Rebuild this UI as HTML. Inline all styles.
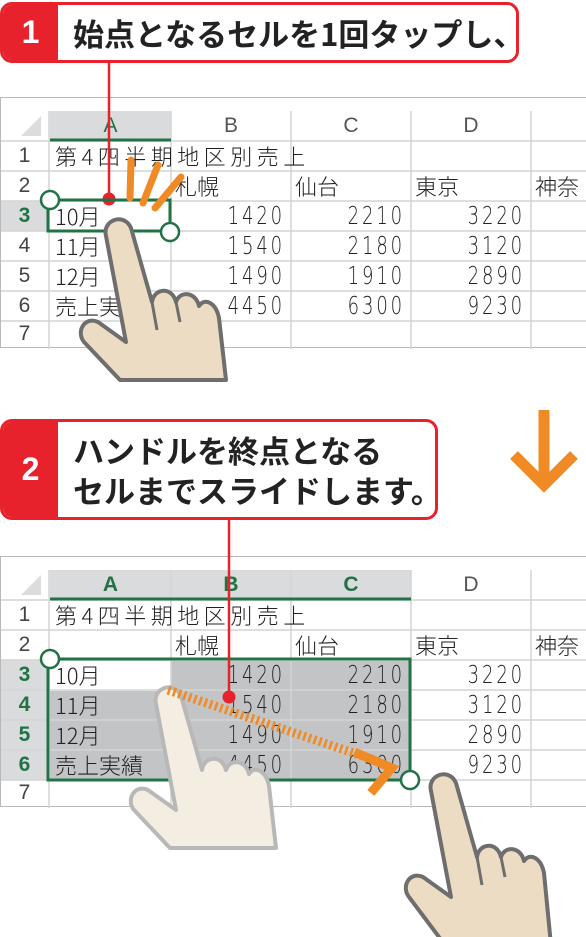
<!DOCTYPE html>
<html><head><meta charset="utf-8"><style>
*{margin:0;padding:0;box-sizing:border-box}
body{width:586px;height:937px;background:#fff;position:relative;overflow:hidden;font-family:"Liberation Sans","Noto Sans CJK JP",sans-serif}
.abs{position:absolute}
.sheet{position:absolute;left:0;width:586px;height:251px;border:1.5px solid #b9b9b9;border-right:none;background:#fff}
.c{position:absolute;font-family:"Noto Sans CJK JP",sans-serif;font-weight:300;font-size:22px;color:#222;line-height:30px;white-space:nowrap}
.n{position:absolute;font-family:"DejaVu Sans",sans-serif;font-weight:300;font-size:25px;color:#222;line-height:30px;text-align:right;width:112px;letter-spacing:4px;transform:scaleX(.72);transform-origin:right}
.h{position:absolute;font-family:"Liberation Sans",sans-serif;font-size:21px;color:#555;text-align:center;line-height:30px}
.rh{position:absolute;left:0;width:47px;text-align:center;font-family:"Liberation Sans",sans-serif;font-size:21px;color:#444;line-height:30px}
.g{color:#217346;font-weight:bold}
.call{position:absolute;border:3px solid #e8222c;border-radius:12px;background:#fff;overflow:hidden}
.badge{position:absolute;left:0;top:0;bottom:0;width:55px;background:#e8222c;color:#fff;font-weight:bold;font-size:32px;display:flex;align-items:center;justify-content:center}
.ct{position:absolute;left:70px;font-family:"Noto Sans CJK JP",sans-serif;font-weight:bold;font-size:31px;color:#222;line-height:40px;white-space:nowrap}
</style></head><body>

<div class="call" style="left:0;top:2px;width:519px;height:61px"><div class="badge">1</div><div class="ct" style="top:8px">始点となるセルを1回タップし、</div></div>

<div class="sheet" style="top:97px">
 <svg class="abs" style="left:0;top:0" width="586" height="251">
  <polygon points="40,38 40,18 20,38" fill="#dcdcdc"/>
  <rect x="49" y="13" width="121" height="30" fill="#dadbdc"/>
  <rect x="0" y="103" width="48" height="30" fill="#dadbdc"/>
  <g stroke="#d4d4d4" stroke-width="1.5">
   <line x1="48" y1="13" x2="48" y2="251"/><line x1="170" y1="13" x2="170" y2="251"/><line x1="290" y1="13" x2="290" y2="251"/><line x1="410" y1="13" x2="410" y2="251"/><line x1="530" y1="13" x2="530" y2="251"/>
   <line x1="0" y1="43" x2="586" y2="43"/><line x1="0" y1="73" x2="586" y2="73"/><line x1="0" y1="103" x2="586" y2="103"/><line x1="0" y1="133" x2="586" y2="133"/><line x1="0" y1="163" x2="586" y2="163"/><line x1="0" y1="193" x2="586" y2="193"/><line x1="0" y1="223" x2="586" y2="223"/>
  </g>
  <line x1="49" y1="42" x2="170" y2="42" stroke="#217346" stroke-width="3"/>
 </svg>
 <div class="h g" style="left:49px;width:121px;top:13px;font-weight:normal">A</div>
 <div class="h" style="left:170px;width:120px;top:13px">B</div>
 <div class="h" style="left:290px;width:120px;top:13px">C</div>
 <div class="h" style="left:410px;width:120px;top:13px">D</div>
 <div class="rh" style="top:43px">1</div><div class="rh" style="top:73px">2</div><div class="rh g" style="top:103px">3</div><div class="rh" style="top:133px">4</div><div class="rh" style="top:163px">5</div><div class="rh" style="top:193px">6</div><div class="rh" style="top:221px">7</div>
 <div class="c" style="left:54px;top:43px;letter-spacing:4.5px">第4四半期地区別売上</div>
 <div class="c" style="left:174px;top:73px">札幌</div><div class="c" style="left:294px;top:73px">仙台</div><div class="c" style="left:414px;top:73px">東京</div><div class="c" style="left:534px;top:73px">神奈</div>
 <div class="c" style="left:54px;top:103px">10月</div><div class="c" style="left:54px;top:133px">11月</div><div class="c" style="left:54px;top:163px">12月</div><div class="c" style="left:54px;top:193px">売上実績</div>
 <div class="n" style="left:172px;top:103px">1420</div><div class="n" style="left:292px;top:103px">2210</div><div class="n" style="left:412px;top:103px">3220</div>
 <div class="n" style="left:172px;top:133px">1540</div><div class="n" style="left:292px;top:133px">2180</div><div class="n" style="left:412px;top:133px">3120</div>
 <div class="n" style="left:172px;top:163px">1490</div><div class="n" style="left:292px;top:163px">1910</div><div class="n" style="left:412px;top:163px">2890</div>
 <div class="n" style="left:172px;top:193px">4450</div><div class="n" style="left:292px;top:193px">6300</div><div class="n" style="left:412px;top:193px">9230</div>
</div>

<div class="sheet" style="top:556px">
 <svg class="abs" style="left:0;top:0" width="586" height="251">
  <polygon points="40,38 40,18 20,38" fill="#dcdcdc"/>
  <rect x="49" y="13" width="361" height="30" fill="#dadbdc"/>
  <rect x="0" y="103" width="48" height="120" fill="#dadbdc"/>
  <rect x="170" y="104" width="240" height="120" fill="#c3c4c6"/>
  <rect x="49" y="134" width="121" height="90" fill="#c3c4c6"/>
  <g stroke="#d4d4d4" stroke-width="1.5">
   <line x1="48" y1="13" x2="48" y2="251"/><line x1="170" y1="13" x2="170" y2="251"/><line x1="290" y1="13" x2="290" y2="251"/><line x1="410" y1="13" x2="410" y2="251"/><line x1="530" y1="13" x2="530" y2="251"/>
   <line x1="0" y1="43" x2="586" y2="43"/><line x1="0" y1="73" x2="586" y2="73"/><line x1="0" y1="103" x2="586" y2="103"/><line x1="0" y1="133" x2="586" y2="133"/><line x1="0" y1="163" x2="586" y2="163"/><line x1="0" y1="193" x2="586" y2="193"/><line x1="0" y1="223" x2="586" y2="223"/>
  </g>
  <line x1="49" y1="42" x2="410" y2="42" stroke="#217346" stroke-width="3"/>
 </svg>
 <div class="h g" style="left:49px;width:121px;top:13px">A</div>
 <div class="h g" style="left:170px;width:120px;top:13px">B</div>
 <div class="h g" style="left:290px;width:120px;top:13px">C</div>
 <div class="h" style="left:410px;width:120px;top:13px">D</div>
 <div class="rh" style="top:43px">1</div><div class="rh" style="top:73px">2</div><div class="rh g" style="top:103px">3</div><div class="rh g" style="top:133px">4</div><div class="rh g" style="top:163px">5</div><div class="rh g" style="top:193px">6</div><div class="rh" style="top:221px">7</div>
 <div class="c" style="left:54px;top:43px;letter-spacing:4.5px">第4四半期地区別売上</div>
 <div class="c" style="left:174px;top:73px">札幌</div><div class="c" style="left:294px;top:73px">仙台</div><div class="c" style="left:414px;top:73px">東京</div><div class="c" style="left:534px;top:73px">神奈</div>
 <div class="c" style="left:54px;top:103px">10月</div><div class="c" style="left:54px;top:133px">11月</div><div class="c" style="left:54px;top:163px">12月</div><div class="c" style="left:54px;top:193px">売上実績</div>
 <div class="n" style="left:172px;top:103px">1420</div><div class="n" style="left:292px;top:103px">2210</div><div class="n" style="left:412px;top:103px">3220</div>
 <div class="n" style="left:172px;top:133px">1540</div><div class="n" style="left:292px;top:133px">2180</div><div class="n" style="left:412px;top:133px">3120</div>
 <div class="n" style="left:172px;top:163px">1490</div><div class="n" style="left:292px;top:163px">1910</div><div class="n" style="left:412px;top:163px">2890</div>
 <div class="n" style="left:172px;top:193px">4450</div><div class="n" style="left:292px;top:193px">6300</div><div class="n" style="left:412px;top:193px">9230</div>
</div>

<div class="call" style="left:0;top:419px;width:438px;height:101px"><div class="badge">2</div><div class="ct" style="top:8px">ハンドルを終点となる</div><div class="ct" style="top:48px">セルまでスライドします。</div></div>

<svg class="abs" style="left:0;top:0" width="586" height="937">
 <line x1="109" y1="62" x2="109" y2="198" stroke="#e8222c" stroke-width="2.5"/>
 <circle cx="109" cy="199" r="6.5" fill="#e8222c"/>
 <rect x="48" y="200" width="122" height="31" fill="none" stroke="#217346" stroke-width="3"/>
 <circle cx="50" cy="200" r="9" fill="#fff" stroke="#217346" stroke-width="2.5"/>
 <circle cx="170" cy="232" r="9" fill="#fff" stroke="#217346" stroke-width="2.5"/>
 <g stroke="#f08a24" stroke-width="7" stroke-linecap="round">
  <line x1="131" y1="160" x2="130" y2="198"/><line x1="158" y1="165" x2="143" y2="203"/><line x1="181" y1="177" x2="155" y2="208"/>
 </g>
 <path d="M106,236 C102,220 124,212 131,228 L152,302 C154,288 172,286 176,302 C180,290 196,292 199,306 C205,297 216,303 219,318 L226,380 L120,380 L84,342 C76,332 84,316 98,322 L126,342 Z" fill="#ecdcc3" stroke="#6e6e6e" stroke-width="4" stroke-linejoin="round"/>
 <path d="M152,302 L157,330 M176,302 L180,322" stroke="#6e6e6e" stroke-width="3" fill="none"/>

 <rect x="48" y="659" width="362" height="121" fill="none" stroke="#217346" stroke-width="3"/>
 <line x1="229" y1="519" x2="229" y2="696" stroke="#e8222c" stroke-width="2.5"/>
 <circle cx="229" cy="697" r="6.5" fill="#e8222c"/>
 <g transform="translate(50,468)">
 <path d="M106,236 C102,220 124,212 131,228 L152,302 C154,288 172,286 176,302 C180,290 196,292 199,306 C205,297 216,303 219,318 L226,380 L120,380 L84,342 C76,332 84,316 98,322 L126,342 Z" fill="#f4ede1" stroke="#b8b8b8" stroke-width="4" stroke-linejoin="round"/>
 </g>
 <line x1="168" y1="690" x2="380" y2="762" stroke="#f08a24" stroke-width="9" stroke-dasharray="2.5 3"/>
 <polyline points="358,748 392,770 367,791" fill="none" stroke="#f08a24" stroke-width="9" transform="rotate(-10 380 770)"/>
 <circle cx="50" cy="659" r="9" fill="#fff" stroke="#217346" stroke-width="2.5"/>
 <circle cx="410" cy="780" r="9" fill="#fff" stroke="#217346" stroke-width="2.5"/>
 <g transform="translate(325,555)">
 <path d="M106,236 C102,220 124,212 131,228 L152,302 C154,288 172,286 176,302 C180,290 196,292 199,306 C205,297 216,303 219,318 L226,390 L120,390 L84,342 C76,332 84,316 98,322 L126,342 Z" fill="#ecdcc3" stroke="#6e6e6e" stroke-width="4" stroke-linejoin="round"/>
 <path d="M152,302 L157,330 M176,302 L180,322" stroke="#6e6e6e" stroke-width="3" fill="none"/>
 </g>
 <line x1="544" y1="410" x2="544" y2="485" stroke="#f08a24" stroke-width="11"/>
 <polyline points="514,455 544,485 574,455" fill="none" stroke="#f08a24" stroke-width="11"/>
</svg>
</body></html>
